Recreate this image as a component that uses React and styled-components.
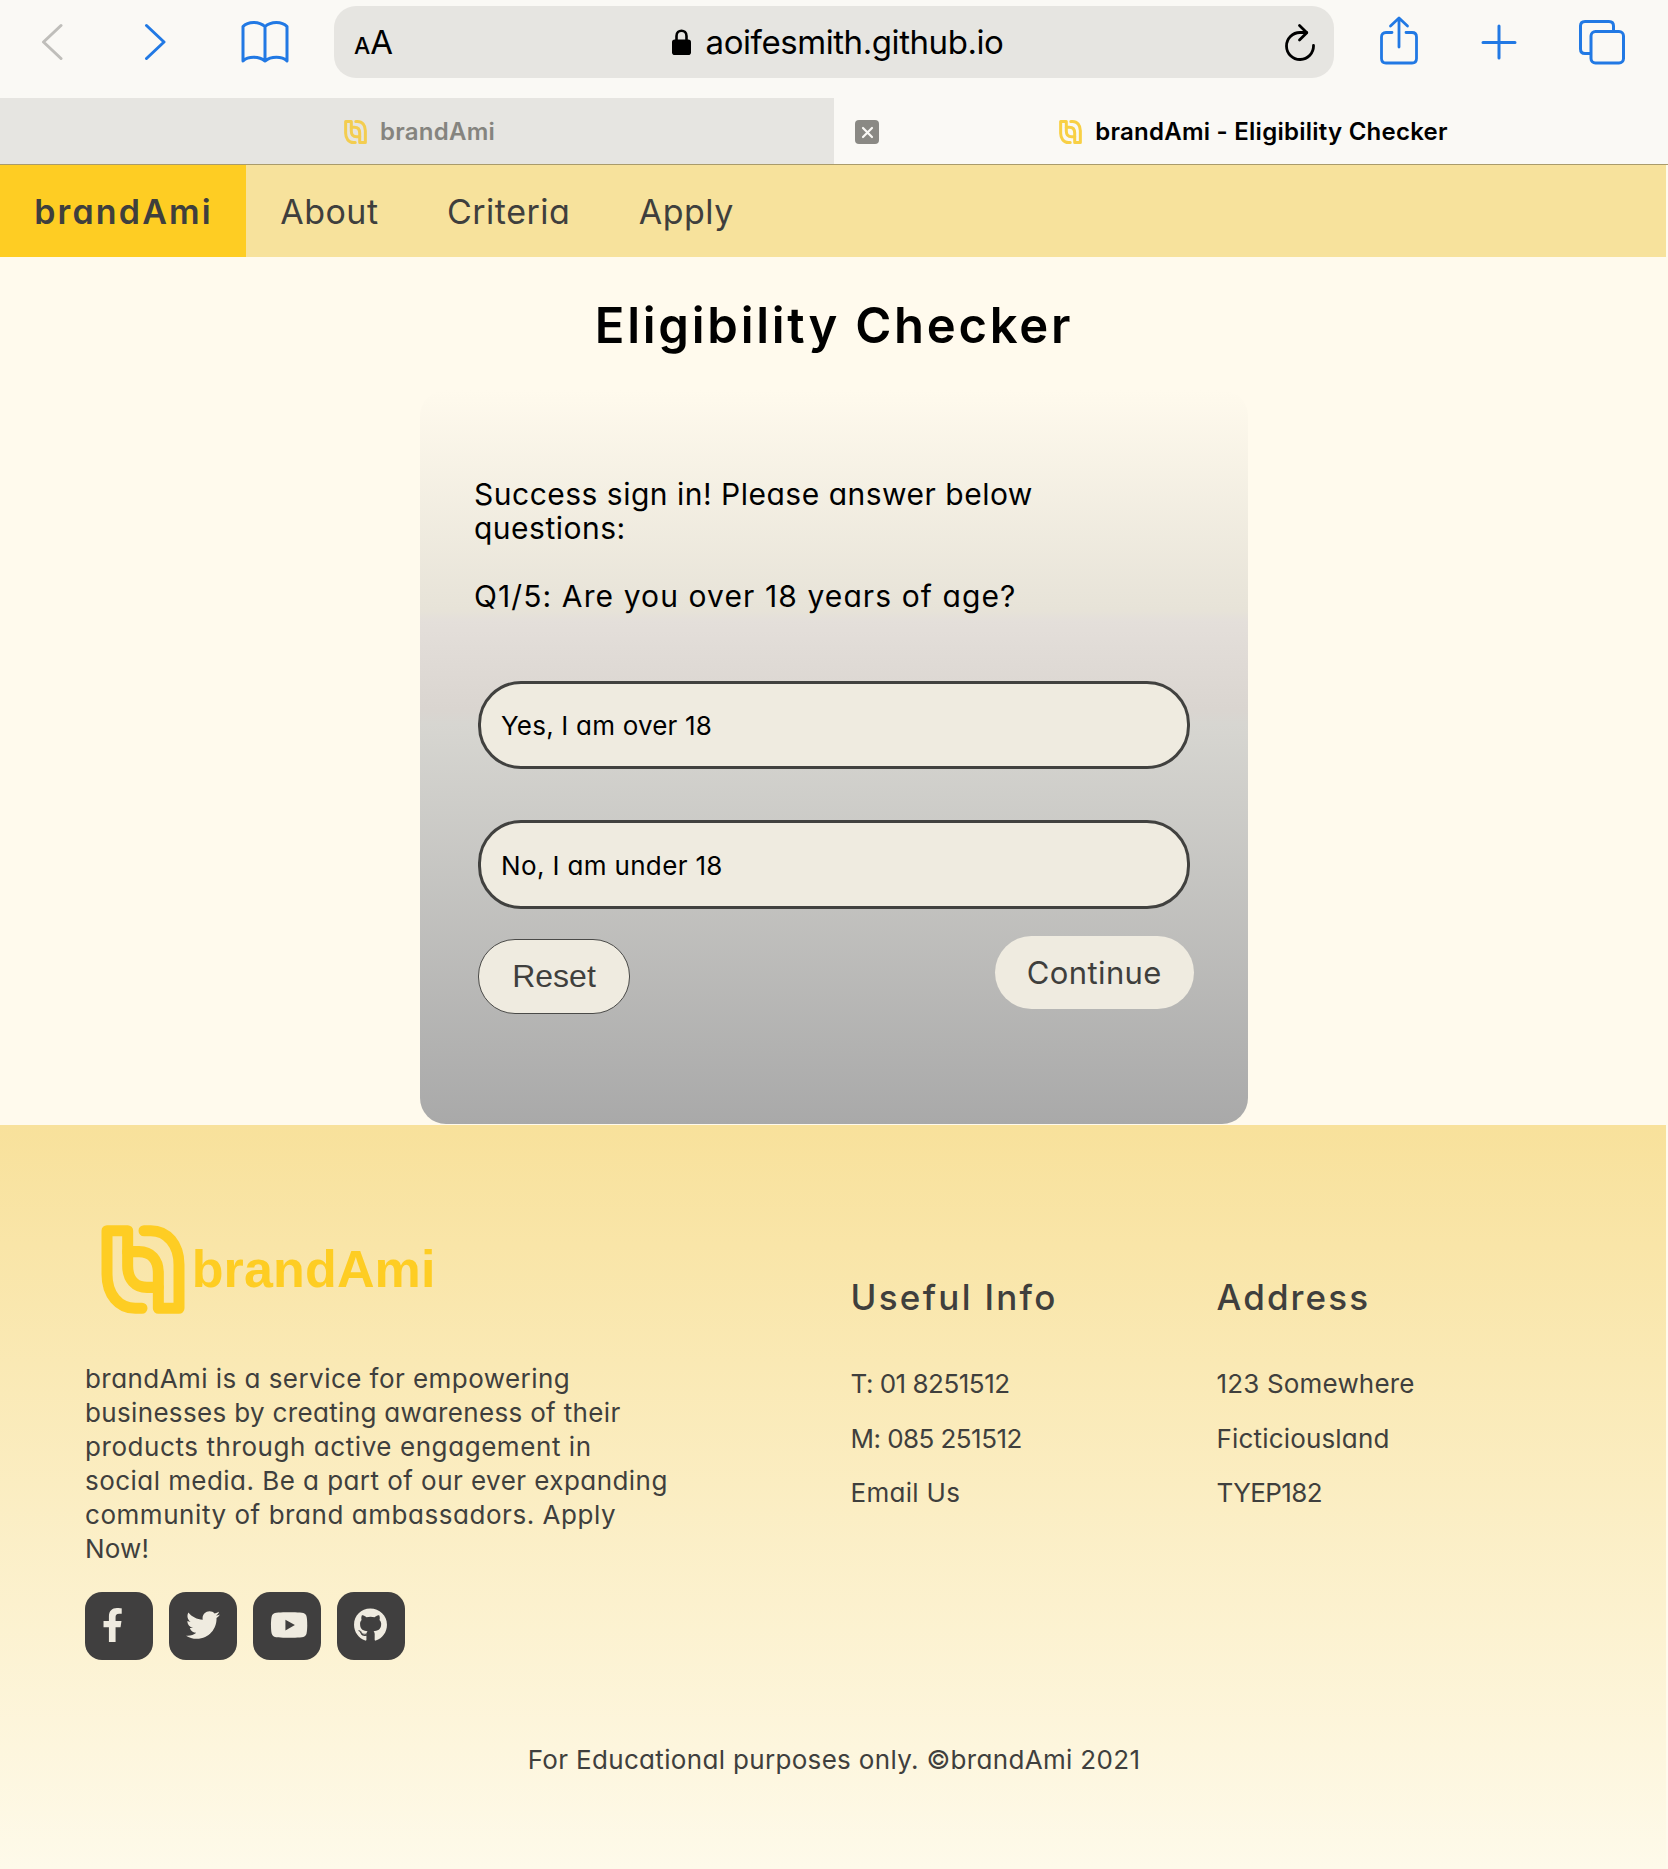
import React from 'react';
import styled, { createGlobalStyle } from 'styled-components';
import { FaFacebookF, FaTwitter, FaYoutube, FaGithub } from 'react-icons/fa';

const GlobalStyle = createGlobalStyle`
  *, *::before, *::after { box-sizing: border-box; }
  body { margin: 0; background: #fffaed; }
  h1, h2, p, ul { margin: 0; padding: 0; }
  ul { list-style: none; }
  svg { display: block; }
`;

const system = `Inter, 'Liberation Sans', sans-serif`;
const ink = '#3f3f3d';
const blue = '#2179e4';

const Screen = styled.div`
  width: 1668px;
  height: 1869px;
  overflow: hidden;
  display: flex;
  flex-direction: column;
  font-family: ${system};
`;

/* ---------- browser chrome ---------- */

const Toolbar = styled.header`
  flex: none;
  height: 98px;
  padding-top: 6px;
  display: grid;
  grid-template-columns: 334px 1000px 334px;
  grid-template-rows: 72px;
  background: #faf9f5;
  color: ${blue};
`;

const NavIcons = styled.div`
  display: flex;
  align-items: center;
  padding-left: 41px;
`;

const ActionIcons = styled.div`
  display: flex;
  align-items: center;
  gap: 60.5px;
  padding-left: 45px;
`;

const LineIcon = styled.svg`
  flex: none;
  fill: none;
  stroke: ${(p) => p.$color || 'currentColor'};
  stroke-width: ${(p) => p.$weight || 3};
  stroke-linecap: round;
  stroke-linejoin: round;
  margin-left: ${(p) => p.$before || 0}px;
`;

const AddressBar = styled.div`
  display: grid;
  grid-template-columns: 80px 1fr 76px;
  align-items: center;
  padding: 0 17px 0 20px;
  border-radius: 22px;
  background: #e6e5e1;
  color: #000;
`;

const TextSize = styled.div`
  display: flex;
  align-items: baseline;
  line-height: 34px;
  font-size: 33px;
  padding-top: 3px;
`;

const SmallA = styled.span`
  font-size: 23px;
  font-weight: 500;
`;

const Url = styled.div`
  display: flex;
  align-items: center;
  justify-content: center;
  gap: 15px;
  font-size: 33px;
  letter-spacing: -0.43px;
  line-height: 40px;
`;

const ReloadSlot = styled.div`
  display: flex;
  justify-content: flex-end;
`;

const TabStrip = styled.div`
  flex: none;
  height: 67px;
  display: grid;
  grid-template-columns: 1fr 1fr;
  border-bottom: 1px solid #a99b6c;
`;

const Tab = styled.div`
  display: grid;
  grid-template-columns: 25px 1fr 21px;
  align-items: center;
  padding: 2px 20px 0 21px;
  background: ${(p) => (p.$active ? '#faf9f5' : '#e6e5e1')};
  color: ${(p) => (p.$active ? '#000' : '#85847f')};
`;

const TabTitle = styled.div`
  grid-column: 2;
  display: flex;
  align-items: center;
  justify-content: center;
  gap: 13px;
  font-size: 24px;
  font-weight: 570;
  letter-spacing: 0.25px;
  line-height: 30px;
`;

const CloseTab = styled.div`
  width: 24px;
  height: 24px;
  border-radius: 4px;
  background: #8a8984;
  display: grid;
  place-items: center;
`;

/* ---------- page ---------- */

const Page = styled.div`
  flex: 1;
  display: flex;
  flex-direction: column;
  font-feature-settings: 'cv11';
  color: ${ink};
`;

const SiteNav = styled.nav`
  flex: none;
  width: 1666px;
  height: 92px;
  display: flex;
  background: #f7e29c;
`;

const NavLink = styled.a`
  display: flex;
  align-items: center;
  width: ${(p) => (p.$brand ? '246px' : 'auto')};
  padding: 1px 34.2px 0;
  font-size: 34px;
  letter-spacing: ${(p) => (p.$brand ? 2.15 : 0.5)}px;
  font-weight: ${(p) => (p.$brand ? 570 : 400)};
  background: ${(p) => (p.$brand ? '#fecd23' : 'none')};
`;

const Main = styled.main`
  flex: none;
  height: 868px;
  padding-top: 38px;
  display: flex;
  flex-direction: column;
  align-items: center;
  color: #000;
`;

const Title = styled.h1`
  font-size: 49px;
  font-weight: 600;
  letter-spacing: 2.75px;
  line-height: 61px;
`;

const Card = styled.section`
  width: 828px;
  height: 734px;
  margin-top: 34px;
  padding: 87px 54.5px 0 54px;
  border-radius: 26px;
  background: linear-gradient(
    #fffaed 0%,
    #e7e3d8 30%,
    #e4dfda 31.5%,
    #dad5d0 43.5%,
    #d7d6d1 45.5%,
    #a9a9a9 100%
  );
`;

const Message = styled.p`
  font-size: 30px;
  line-height: 34px;
  white-space: pre-line;
  letter-spacing: ${(p) => p.$track}px;
  & + & { margin-top: 34px; }
`;

const Answers = styled.div`
  margin: 67.5px 3.5px 0 4px;
  display: flex;
  flex-direction: column;
  gap: 51px;
`;

const Answer = styled.div`
  height: 88.5px;
  padding: 2px 0 0 20px;
  display: flex;
  align-items: center;
  border: 3px solid #41413f;
  border-radius: 43px;
  background: #efebe0;
  font-size: 26px;
  letter-spacing: ${(p) => p.$track}px;
`;

const Actions = styled.div`
  margin: 27px 0 0 4px;
  display: flex;
  justify-content: space-between;
  align-items: flex-start;
`;

const Button = styled.button`
  width: ${(p) => p.$width}px;
  height: ${(p) => (p.$outlined ? 75 : 73.5)}px;
  margin: ${(p) => (p.$outlined ? '3.5px 0 0' : 0)};
  padding: 0;
  border: ${(p) => (p.$outlined ? '1.5px solid #4a4a48' : 'none')};
  border-radius: 37px;
  background: #efebe0;
  color: ${ink};
  font-family: ${(p) => (p.$outlined ? `'Liberation Sans', Arial, sans-serif` : system)};
  font-size: ${(p) => (p.$outlined ? 32 : 31)}px;
  letter-spacing: ${(p) => (p.$outlined ? 0 : 0.4)}px;
  font-feature-settings: inherit;
`;

const Footer = styled.footer`
  flex: 1;
  width: 1666px;
  padding-left: 85px;
  background: linear-gradient(#f8e19b, #fefaea);
`;

const FooterColumns = styled.div`
  height: 618px;
  display: grid;
  grid-template-columns: 765.5px 366px 1fr;
`;

const About = styled.div`
  padding-top: 99.5px;
`;

const LogoRow = styled.div`
  display: flex;
  align-items: center;
  gap: 7px;
  padding-left: 15.7px;
  height: 89px;
  color: #fecd23;
`;

const LogoName = styled.span`
  font: bold 52px / 60px 'Liberation Sans', Arial, sans-serif;
  letter-spacing: 0.15px;
`;

const Blurb = styled.p`
  margin-top: 48.5px;
  font-size: 26px;
  line-height: 34px;
  white-space: nowrap;
`;

const BlurbLine = styled.span`
  display: block;
  letter-spacing: ${(p) => p.$track}px;
`;

const Socials = styled.div`
  display: flex;
  gap: 16px;
  margin-top: 26px;
`;

const Social = styled.a`
  width: 68px;
  height: 68px;
  padding: 16px 0 0 17px;
  border-radius: 17px;
  background: #403f3f;
  color: #efebe0;
  svg {
    height: 34px;
    width: ${(p) => p.$glyph}px;
  }
`;

const Contact = styled.div`
  padding-top: 150px;
`;

const ContactTitle = styled.h2`
  font-size: 35px;
  line-height: 44px;
  font-weight: 520;
  letter-spacing: ${(p) => p.$track}px;
`;

const ContactList = styled.ul`
  margin-top: 38px;
  font-size: 26px;
  line-height: 54.5px;
`;

const ContactItem = styled.li`
  letter-spacing: ${(p) => p.$track}px;
`;

const Copyright = styled.p`
  margin-right: 83px;
  font-size: 26px;
  line-height: 34px;
  text-align: center;
  letter-spacing: 0.33px;
`;

const Mark = ({ width, height, color = 'currentColor' }) => (
  <svg width={width} height={height} viewBox="62 44 252 264" preserveAspectRatio="none" fill="none"
    stroke={color} strokeWidth="33" strokeLinecap="round" strokeLinejoin="round">
    <path d="M185 291H165C115 291 80 250 80 190V61H142V165C142 205 165 229 200 229H234" />
    <path d="M191 61H211C261 61 296 102 296 162V291H234V187C234 147 211 123 176 123H142" />
  </svg>
);

const blurb = [
  ['brandAmi is a service for empowering', 0.45],
  ['businesses by creating awareness of their', 0.34],
  ['products through active engagement in', 0.57],
  ['social media. Be a part of our ever expanding', 0.45],
  ['community of brand ambassadors. Apply', 0.55],
  ['Now!', 0.2],
];

const socials = [
  ['facebook', FaFacebookF, 21.25],
  ['twitter', FaTwitter, 34],
  ['youtube', FaYoutube, 38.25],
  ['github', FaGithub, 33],
];

const contacts = [
  ['Useful Info', 2.3, [['T: 01 8251512', -0.5], ['M: 085 251512', -0.55], ['Email Us', 0.3]]],
  ['Address', 2.1, [['123 Somewhere', 0.17], ['Ficticiousland', 0.17], ['TYEP182', -0.6]]],
];

export default function App() {
  return (
    <Screen>
      <GlobalStyle />
      <Toolbar>
        <NavIcons>
          <LineIcon width="22" height="38" viewBox="0 0 22 38" $color="#bfbeba">
            <path d="M20 2.5L2.5 19L20 35.5" />
          </LineIcon>
          <LineIcon width="22" height="38" viewBox="0 0 22 38" $before={81}>
            <path d="M2.5 2.5L20 19L2.5 35.5" />
          </LineIcon>
          <LineIcon width="50" height="44" viewBox="0 0 50 44" $before={73.5}>
            <path d="M25 6.500C19 1 8 1 3 6.500V41C8 36 19 36 25 41C31 36 42 36 47 41V6.500C42 1 31 1 25 6.500V41" />
          </LineIcon>
        </NavIcons>
        <AddressBar>
          <TextSize><SmallA>A</SmallA>A</TextSize>
          <Url>
            <svg width="19" height="26" viewBox="0 0 19 26">
              <rect x="0" y="10.500" width="19" height="15.500" rx="2.800" fill="#000" />
              <path d="M4.500 11.500V7C4.500 0 14.500 0 14.500 7V11.500" fill="none" stroke="#000" strokeWidth="2.600" />
            </svg>
            <span>aoifesmith.github.io</span>
          </Url>
          <ReloadSlot>
            <LineIcon width="34" height="38" viewBox="0 0 34 38" $weight={2.8}>
              <path d="M23.500 9.500H17A13.500 13.500 0 1 0 30.500 22.500" />
              <path d="M16.500 2.500L23.800 9.700L16.500 17" />
            </LineIcon>
          </ReloadSlot>
        </AddressBar>
        <ActionIcons>
          <LineIcon width="40" height="52" viewBox="0 0 40 52" $weight={2.8}>
            <path d="M13 16.500H7Q2.500 16.500 2.500 21V42.500Q2.500 47 7 47H33Q37.500 47 37.500 42.500V21Q37.500 16.500 33 16.500H27" />
            <path d="M20 31V3M11.500 10L20 2L28.500 10" />
          </LineIcon>
          <LineIcon width="38" height="38" viewBox="0 0 38 38">
            <path d="M19 3V35M3 19.500H35" />
          </LineIcon>
          <LineIcon width="48" height="46" viewBox="0 0 48 46">
            <path d="M35.500 12V7Q35.500 2.500 31 2.500H7Q2.500 2.500 2.500 7V30Q2.500 34.500 7 34.500H12" />
            <rect x="13" y="12.500" width="32.500" height="31.500" rx="4.500" />
          </LineIcon>
        </ActionIcons>
      </Toolbar>

      <TabStrip>
        <Tab>
          <TabTitle><Mark width={23} height={24} color="#f3cd50" /><span>brandAmi</span></TabTitle>
        </Tab>
        <Tab $active>
          <CloseTab>
            <LineIcon width="13" height="13" viewBox="0 0 13 13" $color="#faf9f5" $weight={2.2}>
              <path d="M2 2L11 11M11 2L2 11" />
            </LineIcon>
          </CloseTab>
          <TabTitle><Mark width={23} height={24} color="#f8d045" /><span>brandAmi - Eligibility Checker</span></TabTitle>
        </Tab>
      </TabStrip>

      <Page>
        <SiteNav>
          <NavLink $brand>brandAmi</NavLink>
          <NavLink>About</NavLink>
          <NavLink>Criteria</NavLink>
          <NavLink>Apply</NavLink>
        </SiteNav>

        <Main>
          <Title>Eligibility Checker</Title>
          <Card>
            <Message $track={0.5}>{'Success sign in! Please answer below\nquestions:'}</Message>
            <Message $track={1.1}>Q1/5: Are you over 18 years of age?</Message>
            <Answers>
              <Answer $track={0.2}>Yes, I am over 18</Answer>
              <Answer $track={0.35}>No, I am under 18</Answer>
            </Answers>
            <Actions>
              <Button $outlined $width={152}>Reset</Button>
              <Button $width={198.5}>Continue</Button>
            </Actions>
          </Card>
        </Main>

        <Footer>
          <FooterColumns>
            <About>
              <LogoRow><Mark width={84} height={89} /><LogoName>brandAmi</LogoName></LogoRow>
              <Blurb>
                {blurb.map(([line, track]) => (
                  <BlurbLine key={line} $track={track}>{line}</BlurbLine>
                ))}
              </Blurb>
              <Socials>
                {socials.map(([name, Icon, glyph]) => (
                  <Social key={name} $glyph={glyph}><Icon /></Social>
                ))}
              </Socials>
            </About>
            {contacts.map(([title, track, items]) => (
              <Contact key={title}>
                <ContactTitle $track={track}>{title}</ContactTitle>
                <ContactList>
                  {items.map(([text, spacing]) => (
                    <ContactItem key={text} $track={spacing}>{text}</ContactItem>
                  ))}
                </ContactList>
              </Contact>
            ))}
          </FooterColumns>
          <Copyright>For Educational purposes only. ©brandAmi 2021</Copyright>
        </Footer>
      </Page>
    </Screen>
  );
}
